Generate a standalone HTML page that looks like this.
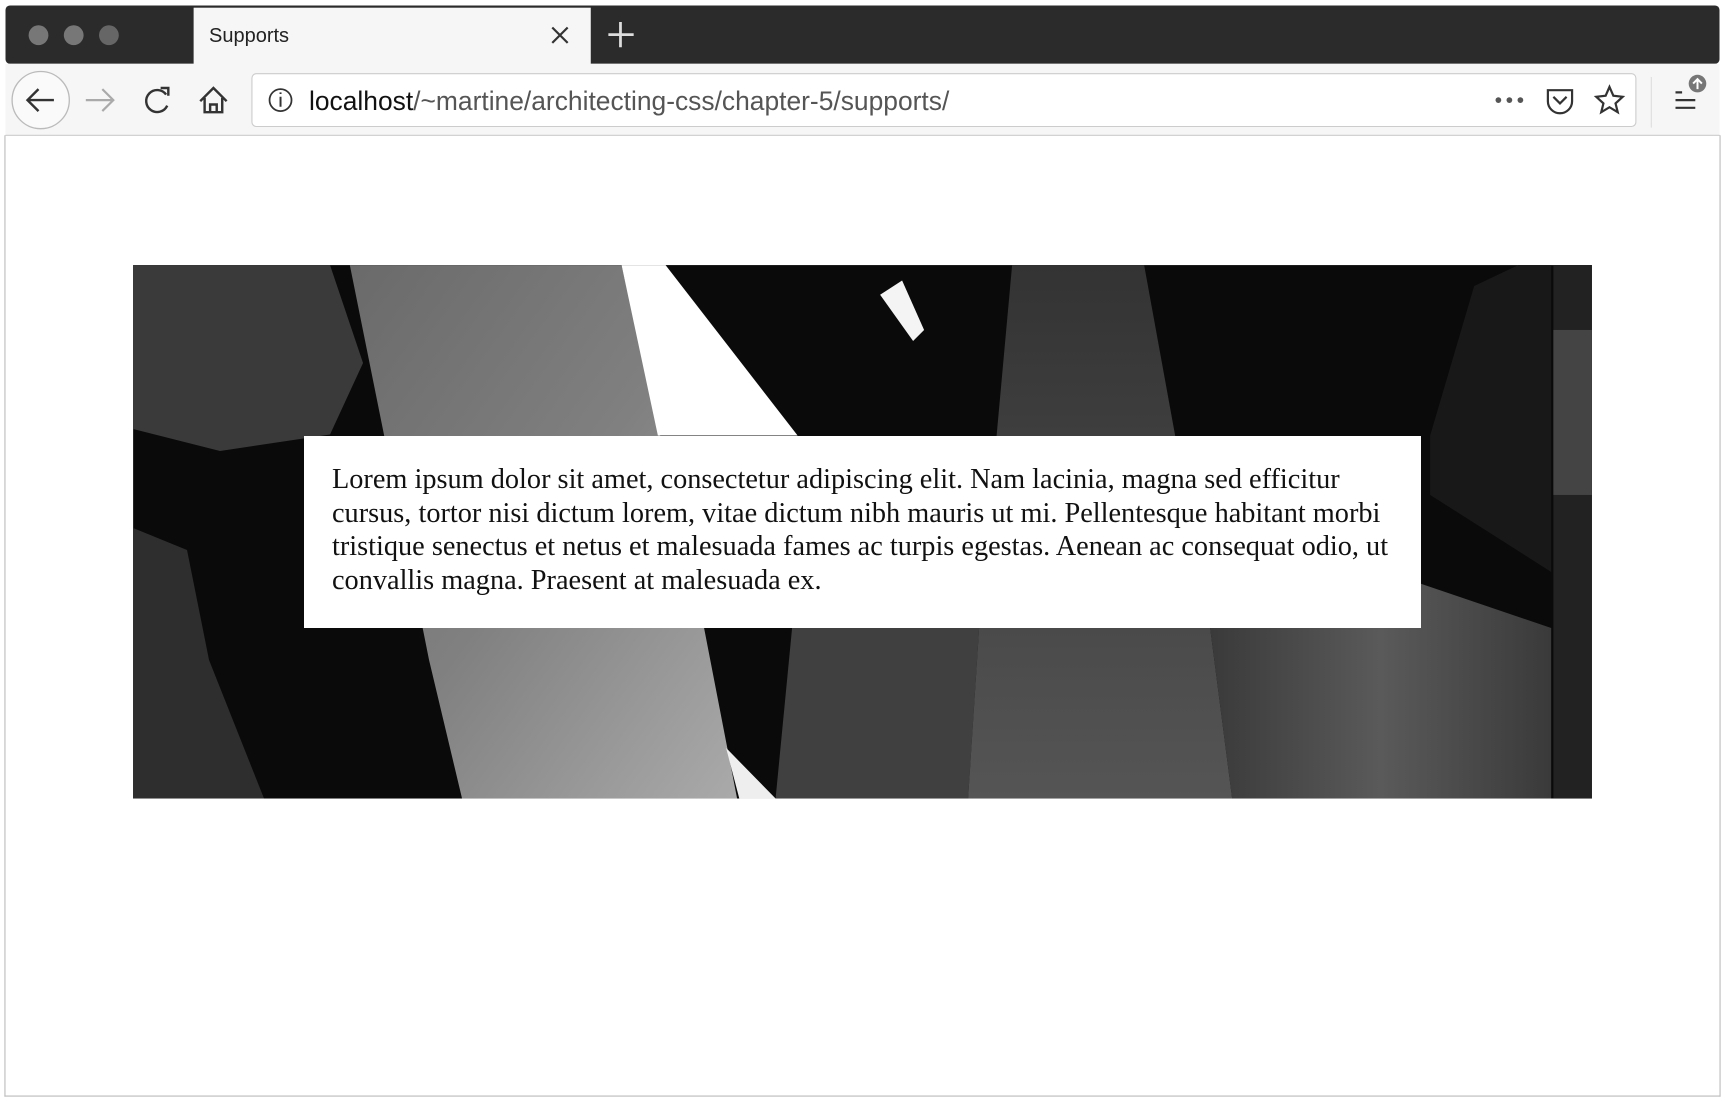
<!DOCTYPE html>
<html><head><meta charset="utf-8"><style>
html,body{margin:0;padding:0;width:1725px;height:1101px;overflow:hidden;background:#fff;font-family:"Liberation Sans",sans-serif}
#bg{position:absolute;left:0;top:0}
.t{position:absolute;white-space:nowrap}
#box{position:absolute;left:304px;top:436px;width:1117px;height:192px;background:#fff}
#box p{margin:0;position:absolute;left:28px;top:27px;font-family:"Liberation Serif",serif;font-size:28.3px;line-height:33.6px;color:#111;white-space:nowrap}
</style></head><body>
<svg id="bg" width="1725" height="1101" viewBox="0 0 1568 1001" preserveAspectRatio="none">
<defs>
<linearGradient id="g1" x1="0" y1="0" x2="1" y2="1"><stop offset="0" stop-color="#6a6a6a"/><stop offset="0.5" stop-color="#808080"/><stop offset="1" stop-color="#aaa"/></linearGradient>
<linearGradient id="g2" x1="0" y1="0" x2="0" y2="1"><stop offset="0" stop-color="#333"/><stop offset="1" stop-color="#555"/></linearGradient>
<linearGradient id="g3" x1="0" y1="0" x2="1" y2="0"><stop offset="0" stop-color="#3a3a3a"/><stop offset="0.5" stop-color="#5a5a5a"/><stop offset="1" stop-color="#3a3a3a"/></linearGradient>
</defs>
<rect x="0" y="0" width="1568" height="1001" fill="#fff"/>
<rect x="5" y="5" width="1558" height="53" rx="4" fill="#2b2b2b"/>
<circle cx="35" cy="32" r="9" fill="#777"/><circle cx="67" cy="32" r="9" fill="#777"/><circle cx="99" cy="32" r="9" fill="#666"/>
<rect x="176" y="7" width="361" height="52" fill="#f6f6f6"/>
<path d="M502 25 L516 39 M516 25 L502 39" stroke="#333" stroke-width="2"/>
<path d="M564 20 V43 M553 31.5 H576" stroke="#ddd" stroke-width="2.5"/>
<rect x="5" y="58" width="1558" height="65" fill="#f6f6f6"/>
<line x1="5" y1="123" x2="1563" y2="123" stroke="#ccc"/>
<circle cx="37" cy="91" r="26" fill="#fafafa" stroke="#bbb" stroke-width="1.2"/>
<path d="M26 91 H49 M35 81 L25 91 L35 101" stroke="#333" stroke-width="2.2" fill="none"/>
<path d="M78 91 H102 M93 81 L103 91 L93 101" stroke="#aaa" stroke-width="2" fill="none"/>
<path d="M151 86 A10 10 0 1 0 152 96" stroke="#333" stroke-width="2.2" fill="none"/><path d="M146 80 L153 80 L153 87" stroke="#333" stroke-width="2.2" fill="none"/>
<path d="M182 92 L194 80 L206 92 M186 89 V102 H202 V89 M191 102 V95 H197 V102" stroke="#333" stroke-width="2.2" fill="none"/>
<rect x="229" y="67" width="1258" height="48" rx="4" fill="#fff" stroke="#ccc"/>
<circle cx="255" cy="91" r="10" fill="none" stroke="#333" stroke-width="1.6"/><path d="M255 88 V97 M255 84 V85.5" stroke="#333" stroke-width="1.8"/>
<circle cx="1362" cy="91" r="2.6" fill="#555"/><circle cx="1372" cy="91" r="2.6" fill="#555"/><circle cx="1382" cy="91" r="2.6" fill="#555"/>
<path d="M1407 82 H1429 V92 A11 11 0 0 1 1407 92 Z" fill="none" stroke="#333" stroke-width="2"/><path d="M1412 88 L1418 94 L1424 88" stroke="#333" stroke-width="2" fill="none"/>
<path d="M1463 79 L1466.5 87 L1475 88 L1468.5 94 L1470.5 102 L1463 97.5 L1455.5 102 L1457.5 94 L1451 88 L1459.5 87 Z" fill="none" stroke="#333" stroke-width="2"/>
<line x1="1501" y1="70" x2="1501" y2="116" stroke="#ddd"/>
<path d="M1523 84 H1529 M1523 91 H1541 M1523 98 H1541" stroke="#333" stroke-width="2"/>
<circle cx="1543" cy="76" r="8" fill="#777"/><path d="M1543 81 V72 M1539 76 L1543 72 L1547 76" stroke="#fff" stroke-width="1.8" fill="none"/>
<line x1="4.5" y1="123" x2="4.5" y2="997" stroke="#bbb"/>
<line x1="1563.5" y1="123" x2="1563.5" y2="997" stroke="#bbb"/>
<line x1="4" y1="996.5" x2="1564" y2="996.5" stroke="#bbb"/>
<rect x="121" y="241" width="1326" height="485" fill="#0a0a0a"/>
<path d="M121 241 H300 L330 330 L300 395 L200 410 L121 390 Z" fill="#3a3a3a"/>
<path d="M121 480 L170 500 L190 600 L240 726 H121 Z" fill="#2e2e2e"/>
<path d="M318 241 H565 L600 396 L640 571 L670 726 H420 L390 600 L350 400 Z" fill="url(#g1)"/>
<path d="M565 241 H605 L725 396 H598 Z" fill="#fff"/>
<path d="M660 680 L705 726 H672 Z" fill="#eee"/>
<path d="M800 268 L820 255 L840 300 L830 310 Z" fill="#f4f4f4"/>
<path d="M705 726 L720 571 H890 L880 726 Z" fill="#404040"/>
<path d="M890 571 L920 241 H1040 L1100 571 L1120 726 H880 Z" fill="url(#g2)"/>
<path d="M1100 571 L1120 500 L1260 520 L1410 571 V726 H1120 Z" fill="url(#g3)"/>
<path d="M1300 396 L1340 260 L1380 241 H1410 V520 L1300 450 Z" fill="#181818"/>
<rect x="1412" y="241" width="35" height="485" fill="#222"/>
<rect x="1412" y="300" width="35" height="150" fill="#444"/>
</svg>
<div class="t" style="left:209px;top:25px;font-size:20px;color:#222">Supports</div>
<div class="t" style="left:309px;top:86px;font-size:26.4px;color:#111">localhost<span style="color:#555">/~martine/architecting-css/chapter-5/supports/</span></div>
<div id="box"><p>Lorem ipsum dolor sit amet, consectetur adipiscing elit. Nam lacinia, magna sed efficitur<br>cursus, tortor nisi dictum lorem, vitae dictum nibh mauris ut mi. Pellentesque habitant morbi<br>tristique senectus et netus et malesuada fames ac turpis egestas. Aenean ac consequat odio, ut<br>convallis magna. Praesent at malesuada ex.</p></div>
</body></html>
